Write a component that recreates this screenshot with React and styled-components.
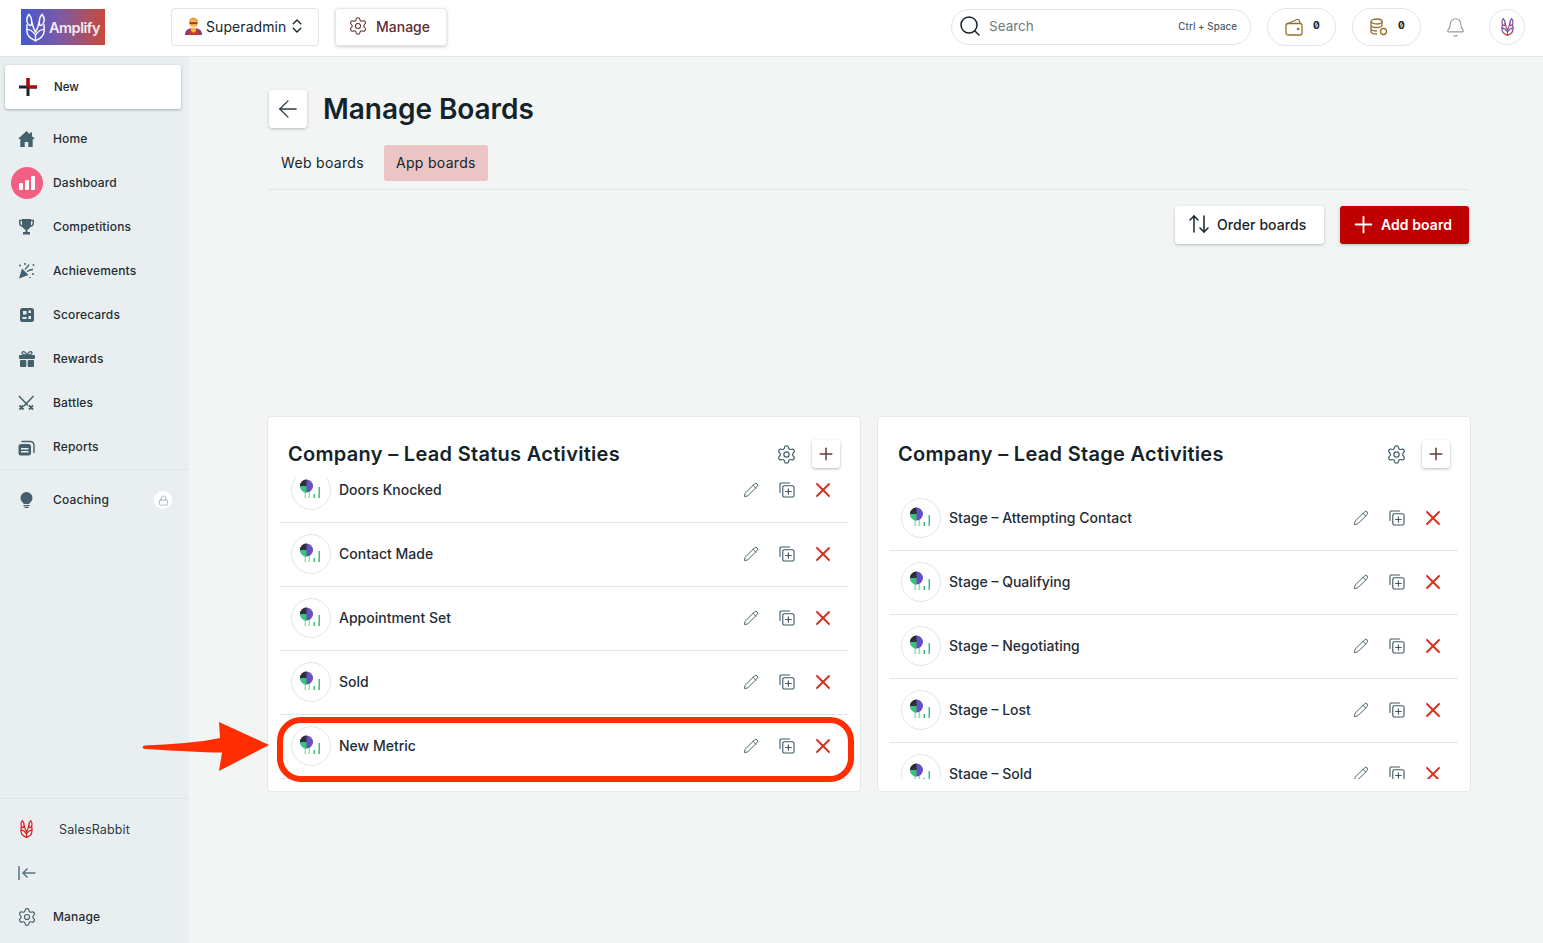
import React from "react";
import styled, { createGlobalStyle } from "styled-components";
import { ChevronsUpDown, Settings, ArrowLeft, Search, Bell, Plus, X, Pencil, Lock, ArrowUpDown } from "lucide-react";

const GlobalStyle = createGlobalStyle`
  html, body { margin: 0; padding: 0; height: 100%; }
  body { font-family: Inter, "Liberation Sans", sans-serif; color: #15242b; background: #f3f5f5; }
  * { box-sizing: border-box; }
`;

const Page = styled.div`
  position: relative;
  width: 1543px;
  height: 943px;
  overflow: hidden;
  display: flex;
  flex-direction: column;
`;

const Header = styled.header`
  height: 57px;
  flex: none;
  display: flex;
  align-items: center;
  padding: 0 18px 2px 21px;
  background: #fff;
  border-bottom: 1px solid #dfe6e8;
`;

const Logo = styled.div`
  width: 84px;
  height: 36px;
  display: flex;
  align-items: center;
  gap: 4px;
  padding: 0 0 0 5px;
  background: linear-gradient(90deg, #4458cf 0%, #7a5aa6 45%, #c94a3a 100%);
  color: #f4ecf2;
  font-size: 14.5px;
  font-weight: 600;
  letter-spacing: -0.5px;
`;

const Select = styled.div`
  margin-left: 66px;
  width: 148px;
  height: 38px;
  display: flex;
  align-items: center;
  padding: 0 0 2px 12px;
  gap: 3px;
  border: 1px solid #dfe6e8;
  border-radius: 4px;
  font-size: 14px;
  letter-spacing: 0.08px;
  svg:last-child { margin-left: -1px; }
`;

const ManageButton = styled.div`
  margin-left: 16px;
  width: 112px;
  height: 38px;
  display: flex;
  align-items: center;
  gap: 8px;
  padding: 0 0 2px 12px;
  border: 1px solid #e3e9ea;
  border-radius: 4px;
  box-shadow: 0 1px 3px rgba(60, 80, 90, 0.3);
  color: #5f2e32;
  font-size: 14px;
  font-weight: 500;
`;

const SearchBox = styled.div`
  margin-left: auto;
  width: 300px;
  height: 36px;
  display: flex;
  align-items: center;
  padding: 0 13px 2px 6px;
  border: 1px solid #dfe6e8;
  border-radius: 18px;
  color: #6f7a80;
  font-size: 13.5px;
  svg { margin-right: 7px; color: #15242b; }
`;

const Shortcut = styled.span`
  margin-left: auto;
  font-size: 9.7px;
  font-weight: 500;
  letter-spacing: 0.1px;
  color: #4c5c64;
`;

const Pill = styled.div`
  margin-left: 16px;
  width: 69px;
  height: 38px;
  display: flex;
  align-items: center;
  gap: 10px;
  padding-left: 17px;
  border: 1px solid #dfe6e8;
  border-radius: 19px;
`;

const Count = styled.span`
  padding-bottom: 4px;
  font-size: 10px;
  font-weight: 700;
  font-feature-settings: "zero";
  color: #15242b;
`;

const BellWrap = styled.div`
  margin-left: 24px;
  display: flex;
  color: #8a9ba3;
`;

const Avatar = styled.div`
  margin-left: 23px;
  width: 36px;
  height: 36px;
  display: flex;
  align-items: center;
  justify-content: center;
  border: 1px solid #dfe6e8;
  border-radius: 50%;
`;

const Body = styled.div`
  flex: 1;
  display: flex;
  min-height: 0;
`;

const Sidebar = styled.aside`
  width: 189px;
  flex: none;
  display: flex;
  flex-direction: column;
  background: #e9eff0;
  padding: 8px 0 4px;
`;

const NewButton = styled.div`
  margin: 0 8px 8px 5px;
  height: 44px;
  display: flex;
  align-items: center;
  padding-left: 14px;
  gap: 17px;
  background: #fff;
  border-radius: 3px;
  box-shadow: 0 1px 3px rgba(60, 80, 90, 0.4);
  font-size: 11.5px;
  font-weight: 500;
`;

const NavItem = styled.div`
  height: 44px;
  flex: none;
  display: flex;
  align-items: center;
  font-size: 12px;
  font-weight: 500;
  letter-spacing: 0.15px;
  color: #1f2d35;
`;

const NavLabel = styled.span`
  padding-bottom: 2px;
`;

const NavIcon = styled.span`
  width: 53px;
  flex: none;
  display: flex;
  justify-content: center;
  color: #44606c;
`;

const PinkCircle = styled.span`
  width: 32px;
  height: 32px;
  border-radius: 50%;
  background: #f25f82;
  display: flex;
  align-items: flex-end;
  justify-content: center;
  gap: 2px;
  padding-bottom: 9px;
`;

const PinkBar = styled.i`
  width: 4px;
  height: ${(p) => p.$h}px;
  background: #fff;
  border-radius: 1px;
`;

const Divider = styled.div`
  height: 1px;
  flex: none;
  background: #dfe6e8;
  margin-bottom: ${(p) => p.$gap || 0}px;
`;

const LockBadge = styled.span`
  margin-left: auto;
  margin-right: 17px;
  width: 18px;
  height: 18px;
  border-radius: 50%;
  background: #fff;
  display: flex;
  align-items: center;
  justify-content: center;
  color: #8a9ba3;
`;

const SidebarBottom = styled.div`
  margin-top: auto;
`;

const BrandName = styled.span`
  margin-left: 6px;
  font-size: 12.5px;
  font-weight: 400;
  color: #2f3a40;
`;

const Main = styled.main`
  flex: 1;
  min-width: 0;
  padding: 33px 74px 0 79px;
  background: #f3f5f5;
`;

const TitleRow = styled.div`
  display: flex;
  align-items: center;
  gap: 16px;
  margin-left: 1px;
  height: 38px;
`;

const BackButton = styled.div`
  width: 38px;
  height: 38px;
  display: flex;
  align-items: center;
  justify-content: center;
  background: #fff;
  border-radius: 3px;
  box-shadow: 0 1px 3px rgba(60, 80, 90, 0.35);
  color: #2c3a41;
`;

const Title = styled.h1`
  margin: 0;
  font-size: 28px;
  font-weight: 600;
  letter-spacing: -0.05px;
  color: #14232a;
`;

const Tabs = styled.div`
  display: flex;
  gap: 8px;
  margin-top: 17px;
  padding: 0 0 8px 1px;
  border-bottom: 1px solid #dfe6e8;
`;

const Tab = styled.div`
  height: 36px;
  display: flex;
  align-items: center;
  padding: 0 12px 2px;
  border-radius: 3px;
  font-size: 14px;
  letter-spacing: 0.32px;
  background: ${(p) => (p.$active ? "#ebc5c5" : "transparent")};
`;

const Actions = styled.div`
  display: flex;
  justify-content: flex-end;
  gap: 16px;
  margin-top: 16px;
`;

const ActionButton = styled.div`
  height: 38px;
  width: ${(p) => p.$w}px;
  display: flex;
  align-items: center;
  gap: ${(p) => (p.$primary ? 4 : 6)}px;
  padding: 0 0 2px ${(p) => (p.$primary ? 10 : 12)}px;
  border-radius: 3px;
  font-size: 14px;
  font-weight: ${(p) => (p.$primary ? 600 : 500)};
  letter-spacing: 0.08px;
  background: ${(p) => (p.$primary ? "#bf0000" : "#fff")};
  color: ${(p) => (p.$primary ? "#fff" : "#15242b")};
  box-shadow: 0 1px 3px rgba(60, 80, 90, 0.35);
`;

const Cards = styled.div`
  display: grid;
  grid-template-columns: 594px 594px;
  gap: 16px;
  margin: 172px -2px 0 -1px;
`;

const Card = styled.section`
  height: 376px;
  background: #fff;
  border: 1px solid #e3e9ea;
  border-radius: 4px;
`;

const CardHead = styled.div`
  height: 60px;
  display: flex;
  align-items: center;
  padding: 14px 20px 0;
  color: #44606c;
`;

const CardTitle = styled.h2`
  margin: 0 auto 0 0;
  font-size: 20px;
  font-weight: 600;
  letter-spacing: 0.3px;
  color: #14232a;
`;

const SquareButton = styled.div`
  margin-left: 15px;
  width: 28px;
  height: 28px;
  display: flex;
  align-items: center;
  justify-content: center;
  border-radius: 3px;
  background: #fff;
  color: #6b3a3e;
  box-shadow: 0 1px 3px rgba(60, 80, 90, 0.4);
`;

const ListClip = styled.div`
  margin: 0 12px;
  height: 302px;
  overflow: hidden;
`;

const List = styled.ul`
  list-style: none;
  margin: ${(p) => p.$offset}px 0 0;
  padding: 0;
`;

const Row = styled.li`
  height: 64px;
  display: flex;
  align-items: center;
  padding: 0 13px 1px 11px;
  border-bottom: 1px solid #dfe6e8;
  font-size: 14px;
  font-weight: 500;
  color: #1f2d35;
`;

const RowName = styled.span`
  padding-bottom: 2px;
`;

const MetricCircle = styled.span`
  width: 40px;
  height: 40px;
  flex: none;
  margin-right: 8px;
  display: flex;
  align-items: center;
  justify-content: center;
  border: 1px solid #e3e6e8;
  border-radius: 50%;
`;

const RowActions = styled.div`
  margin-left: auto;
  display: flex;
  gap: 12px;
`;

const RowAction = styled.span`
  width: 24px;
  height: 24px;
  display: flex;
  align-items: center;
  justify-content: center;
  color: ${(p) => (p.$danger ? "#d9301f" : "#3d5661")};
`;

const Highlight = styled.div`
  position: absolute;
  left: 277px;
  top: 717px;
  width: 577px;
  height: 65px;
  border: 6px solid #ff2d00;
  border-radius: 24px;
  pointer-events: none;
`;

const ArrowMark = styled.svg`
  position: absolute;
  left: 140px;
  top: 718px;
`;

const RabbitMark = ({ w = 19, h = 29, color = "#fff", sw = 1.5, gradient }) => (
  <svg width={w} height={h} viewBox="0 0 20 30" fill="none" stroke={gradient ? "url(#rabbitGrad)" : color} strokeWidth={sw} strokeLinejoin="round" strokeLinecap="round">
    {gradient && (
      <defs>
        <linearGradient id="rabbitGrad" x1="0" y1="0" x2="0" y2="1">
          <stop offset="0" stopColor="#4458cf" />
          <stop offset="1" stopColor="#d23c3c" />
        </linearGradient>
      </defs>
    )}
    <path d="M3 1C0 5 0 10 3.500 12.500 6 14 6 11 6 9 6 6 5 3 3 1z" />
    <path d="M17 1c3 4 3 9-.500 11.500C14 14 14 11 14 9c0-3 1-6 3-8z" />
    <path d="M6 9c1 4 2.500 8 4 11 1.500-3 3-7 4-11" />
    <path d="M1 12v7c0 4 4 8 9 10 5-2 9-6 9-10v-7" />
    <path d="M1 17c3 0 6 1.500 9 6 3-4.500 6-6 9-6M10 23v6" />
  </svg>
);

const SuperheroIcon = () => (
  <svg width="19" height="18" viewBox="0 0 19 18">
    <path d="M1 18c0-5 3-7 8.500-7s8.500 2 8.500 7z" fill="#7b3f8f" />
    <path d="M4 18l1-6h9l1 6z" fill="#c0392b" />
    <path d="M7 11h5v3l-2.500 2L7 14z" fill="#f6b73c" />
    <circle cx="9.500" cy="6" r="4.500" fill="#f7c25c" />
    <path d="M5 5c0-6 9-6 9 0-2-2-7-2-9 0z" fill="#e9a23b" />
    <rect x="5.500" y="5" width="8" height="2.200" rx="1" fill="#b5382e" />
  </svg>
);

const WalletIcon = () => (
  <svg width="18" height="18" viewBox="0 0 18 18" fill="none" stroke="#94702c" strokeWidth="1.300" strokeLinejoin="round">
    <rect x="1" y="5.500" width="16" height="11.500" rx="2" />
    <path d="M2 6l10-4.500c1-.3 2 .2 2.500 1.500L15 5.500" />
    <circle cx="13" cy="11" r=".7" fill="#94702c" />
  </svg>
);

const CoinsIcon = () => (
  <svg width="18" height="18" viewBox="0 0 18 18" fill="none" stroke="#94702c" strokeWidth="1.300">
    <ellipse cx="6.500" cy="3.500" rx="5.500" ry="2.500" />
    <path d="M1 3.500v10c0 1.500 2.500 2.500 6 2.500M12 3.500v4M1 7c0 1.500 2.500 2.500 5.500 2.500S12 8.500 12 7M1 10.500C1 12 3.500 13 7 13" />
    <circle cx="13.500" cy="13.500" r="3" />
  </svg>
);

const HomeIcon = () => (
  <svg width="17" height="16" viewBox="0 0 17 16" fill="#44606c">
    <path d="M8.500 0L0 8h2.300v8h4.400v-5h3.600v5h4.400V8H17l-3-2.800V1.500h-2v1.800z" />
  </svg>
);

const TrophyIcon = () => (
  <svg width="15" height="16" viewBox="0 0 15 16" fill="#44606c">
    <path d="M3 0h9v6c0 2.600-1.800 4.200-3.500 4.600V13H11v2.500H4V13h2.500v-2.400C4.800 10.200 3 8.600 3 6z" />
    <path d="M3 1.500H.7v2.200C.7 5.800 2 7 3.800 7.200M12 1.500h2.300v2.200c0 2.100-1.300 3.300-3.100 3.500" fill="none" stroke="#44606c" strokeWidth="1.400" />
  </svg>
);

const ConfettiIcon = () => (
  <svg width="17" height="16" viewBox="0 0 17 16" fill="#44606c">
    <path d="M1 15.500L4 5.500l6.500 6.500z" />
    <path d="M7 6.500c1-1.500 3-3 4-5M9 8.500c1.500-1 3.500-2 6-2" fill="none" stroke="#44606c" strokeWidth="1.400" />
    <circle cx="2" cy="2.500" r="1" />
    <circle cx="7" cy="1" r="1" />
    <circle cx="15.500" cy="2" r=".9" />
    <circle cx="15" cy="11" r="1" />
    <circle cx="12" cy="14.500" r=".8" />
  </svg>
);

const ScorecardIcon = () => (
  <svg width="16" height="16" viewBox="0 0 16 16">
    <rect x="1" y="1" width="14" height="14" rx="2.500" fill="#44606c" />
    <rect x="4" y="4" width="3.500" height="3.500" fill="#e9eff0" />
    <rect x="9.500" y="3.500" width="2.500" height="2.500" fill="#e9eff0" />
    <rect x="9.500" y="9" width="2.500" height="3" fill="#e9eff0" />
    <rect x="3.500" y="10" width="4" height="2" fill="#e9eff0" />
  </svg>
);

const GiftIcon = () => (
  <svg width="16" height="16" viewBox="0 0 16 16" fill="#44606c">
    <rect x="0" y="4" width="16" height="4" rx="1" />
    <rect x="1" y="9" width="6.300" height="7" rx="1" />
    <rect x="8.700" y="9" width="6.300" height="7" rx="1" />
    <path d="M8 4C6.500 1 4.500 0 3.500 1S3 4 8 4c5 0 5.500-2 4.500-3S9.500 1 8 4z" fill="none" stroke="#44606c" strokeWidth="1.300" />
  </svg>
);

const BattleIcon = () => (
  <svg width="17" height="16" viewBox="0 0 17 16" fill="none" stroke="#44606c" strokeWidth="1.500">
    <path d="M1 1l9 9.500M15.500 1L6 11" />
    <path d="M1.500 10.500l4 4M5.500 10.500l-4 4M11 10.500l4 4M15 10.500l-4 4" strokeWidth="1.800" />
  </svg>
);

const ReportIcon = () => (
  <svg width="17" height="17" viewBox="0 0 17 17" fill="none">
    <rect x="0.500" y="5" width="12.500" height="11.500" rx="2.500" fill="#44606c" />
    <rect x="3" y="9" width="7.500" height="1.500" fill="#e9eff0" />
    <rect x="3" y="12" width="7.500" height="1.500" fill="#e9eff0" />
    <path d="M4 2.500h8c2.500 0 4 1.500 4 4v7" stroke="#44606c" strokeWidth="1.400" strokeLinecap="round" />
  </svg>
);

const BulbIcon = () => (
  <svg width="13" height="16" viewBox="0 0 13 16" fill="#44606c">
    <path d="M6.500 0a6 6 0 0 1 6 6c0 2.500-1.500 4-3 5v1h-6v-1c-1.500-1-3-2.500-3-5a6 6 0 0 1 6-6z" />
    <rect x="3.500" y="13" width="6" height="1.300" />
    <rect x="4.500" y="15" width="4" height="1" />
  </svg>
);

const CollapseIcon = () => (
  <svg width="18" height="14" viewBox="0 0 18 14" fill="none" stroke="#5a7480" strokeWidth="1.500">
    <path d="M1 0v14M17.500 7H5M9.500 2.500L5 7l4.500 4.500" />
  </svg>
);

const CopyPlusIcon = () => (
  <svg width="16" height="16" viewBox="0 0 16 16" fill="none" stroke="#3d5661" strokeWidth="1.100" strokeLinecap="round">
    <path d="M1 10.500V2.200C1 1.500 1.500 1 2.200 1h8.300" />
    <rect x="3.800" y="3.800" width="11.200" height="11.200" rx="1.500" />
    <path d="M9.400 6.700v5.600M6.600 9.500h5.600" />
  </svg>
);

const MetricIcon = () => (
  <svg width="24" height="24" viewBox="0 0 24 24">
    <rect x="5.500" y="13" width="1.500" height="7" fill="#8ee5b2" />
    <rect x="9.500" y="13" width="1.500" height="7" fill="#8ee5b2" />
    <rect x="14.500" y="16" width="1.500" height="4" fill="#3ec27a" />
    <rect x="19.500" y="9" width="1.500" height="11" fill="#3ec27a" />
    <circle cx="7.500" cy="8" r="6.500" fill="#6a4fc0" />
    <path d="M7.500 8V1.500A6.500 6.500 0 0 0 1 8z" fill="#2b3036" />
    <path d="M7.500 8H1a6.500 6.500 0 0 0 6.500 6.500z" fill="#35c678" />
  </svg>
);

const MetricRow = ({ name }) => (
  <Row>
    <MetricCircle><MetricIcon /></MetricCircle>
    <RowName>{name}</RowName>
    <RowActions>
      <RowAction><Pencil size={16} strokeWidth={1.4} /></RowAction>
      <RowAction><CopyPlusIcon /></RowAction>
      <RowAction $danger><X size={24} strokeWidth={1.9} /></RowAction>
    </RowActions>
  </Row>
);

const BoardCard = ({ title, rows, offset }) => (
  <Card>
    <CardHead>
      <CardTitle>{title}</CardTitle>
      <Settings size={21} strokeWidth={1.4} />
      <SquareButton><Plus size={20} strokeWidth={1.8} /></SquareButton>
    </CardHead>
    <ListClip>
      <List $offset={offset}>
        {rows.map((r) => <MetricRow key={r} name={r} />)}
      </List>
    </ListClip>
  </Card>
);

const NAV = [
  ["Home", <HomeIcon />],
  ["Dashboard", <PinkCircle><PinkBar $h={7} /><PinkBar $h={10} /><PinkBar $h={14} /></PinkCircle>],
  ["Competitions", <TrophyIcon />],
  ["Achievements", <ConfettiIcon />],
  ["Scorecards", <ScorecardIcon />],
  ["Rewards", <GiftIcon />],
  ["Battles", <BattleIcon />],
  ["Reports", <ReportIcon />],
];

const LEAD_STATUS = ["Doors Knocked", "Contact Made", "Appointment Set", "Sold", "New Metric"];
const LEAD_STAGE = ["Stage – Attempting Contact", "Stage – Qualifying", "Stage – Negotiating", "Stage – Lost", "Stage – Sold"];

export default function App() {
  return (
    <Page>
      <GlobalStyle />
      <Header>
        <Logo><RabbitMark />Amplify</Logo>
        <Select><SuperheroIcon />Superadmin<ChevronsUpDown size={18} strokeWidth={1.8} /></Select>
        <ManageButton><Settings size={20} strokeWidth={1.3} />Manage</ManageButton>
        <SearchBox>
          <Search size={24} strokeWidth={1.5} />
          Search
          <Shortcut>Ctrl + Space</Shortcut>
        </SearchBox>
        <Pill><WalletIcon /><Count>0</Count></Pill>
        <Pill><CoinsIcon /><Count>0</Count></Pill>
        <BellWrap><Bell size={21} strokeWidth={1.2} /></BellWrap>
        <Avatar><RabbitMark w={13} h={18} sw={2} gradient /></Avatar>
      </Header>
      <Body>
        <Sidebar>
          <NewButton>
            <svg width="18" height="18" viewBox="0 0 18 18">
              <rect x="0" y="7.500" width="18" height="3" fill="#15242b" />
              <rect x="7.500" y="0" width="3" height="18" fill="#15242b" />
              <rect x="9" y="7.500" width="9" height="3" fill="#bf0000" />
              <rect x="7.500" y="0" width="3" height="9" fill="#bf0000" />
            </svg>
            New
          </NewButton>
          {NAV.map(([label, icon]) => (
            <NavItem key={label}><NavIcon>{icon}</NavIcon><NavLabel>{label}</NavLabel></NavItem>
          ))}
          <Divider $gap={8} />
          <NavItem>
            <NavIcon><BulbIcon /></NavIcon>
            <NavLabel>Coaching</NavLabel>
            <LockBadge><Lock size={11} strokeWidth={1.4} /></LockBadge>
          </NavItem>
          <SidebarBottom>
            <Divider $gap={8} />
            <NavItem>
              <NavIcon><RabbitMark w={13} h={18} color="#e01a1a" sw={2} /></NavIcon>
              <BrandName>SalesRabbit</BrandName>
            </NavItem>
            <NavItem><NavIcon><CollapseIcon /></NavIcon></NavItem>
            <NavItem><NavIcon><Settings size={20} strokeWidth={1.4} /></NavIcon><NavLabel>Manage</NavLabel></NavItem>
          </SidebarBottom>
        </Sidebar>
        <Main>
          <TitleRow>
            <BackButton><ArrowLeft size={28} strokeWidth={1.1} /></BackButton>
            <Title>Manage Boards</Title>
          </TitleRow>
          <Tabs>
            <Tab>Web boards</Tab>
            <Tab $active>App boards</Tab>
          </Tabs>
          <Actions>
            <ActionButton $w={149}><ArrowUpDown size={24} strokeWidth={1.5} />Order boards</ActionButton>
            <ActionButton $w={129} $primary><Plus size={27} strokeWidth={1.6} />Add board</ActionButton>
          </Actions>
          <Cards>
            <BoardCard title="Company – Lead Status Activities" rows={LEAD_STATUS} offset={-18} />
            <BoardCard title="Company – Lead Stage Activities" rows={LEAD_STAGE} offset={10} />
          </Cards>
        </Main>
      </Body>
      <Highlight />
      <ArrowMark width="132" height="56" viewBox="0 0 132 56" fill="#ff2d00">
        <path d="M5 27.500c25-1 55-3 75-7.500l-1-16 50 23-50 26 3-18.500c-20 0-50-2-77-3.500-3-.2-3-3.500 0-3.500z" />
      </ArrowMark>
    </Page>
  );
}
